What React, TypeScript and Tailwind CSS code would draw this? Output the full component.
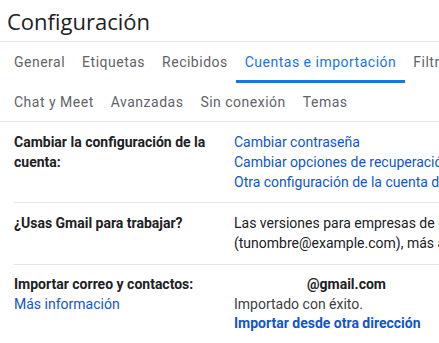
const ROW1_TABS = ["General", "Etiquetas", "Recibidos", "Cuentas e importación", "Filtros y direcciones bloqueadas"];
const ROW2_TABS = ["Chat y Meet", "Avanzadas", "Sin conexión", "Temas"];
const ACTIVE_TAB = "Cuentas e importación";

function Tab({ label }: { label: string }) {
  const active = label === ACTIVE_TAB;
  return (
    <div
      className={
        "relative shrink-0 px-[8.5px] whitespace-nowrap " +
        (active ? "text-[#1a73e8]" : "text-[#5f6368]")
      }
    >
      <span className="leading-[20px]">{label}</span>
      {active && <div className="absolute left-0 right-0 bottom-0 h-[3px] bg-[#1a73e8]" />}
    </div>
  );
}

function SettingRow({
  label,
  children,
  className = "",
}: {
  label: React.ReactNode;
  children: React.ReactNode;
  className?: string;
}) {
  return (
    <div className={"flex border-t border-[#e5e5e5] " + className}>
      <div className="w-[220px] shrink-0 pr-[8px] font-bold text-[#202124]">{label}</div>
      <div className="flex flex-col whitespace-nowrap text-[#202124]">{children}</div>
    </div>
  );
}

export default function App() {
  return (
    <div
      className="w-[439px] h-[343px] overflow-hidden bg-white text-[14px] leading-[20px]"
      style={{ fontFamily: "Roboto, 'Liberation Sans', sans-serif" }}
    >
      {/* Page title */}
      <div
        className="h-[42px] flex items-center px-[7px] text-[22px] text-[#202124] border-b border-[#e5e5e5]"
        style={{ fontFamily: "'Open Sans', Roboto, sans-serif" }}
      >
        Configuración
      </div>

      {/* Tab strip */}
      <div className="border-b border-[#e5e5e5] px-[5.5px] text-[14px] tracking-[0.5px]">
        <div className="flex h-[41px] pt-[10px]">
          {ROW1_TABS.map(t => (
            <Tab key={t} label={t} />
          ))}
        </div>
        <div className="flex h-[38px] pt-[9px]">
          {ROW2_TABS.map(t => (
            <Tab key={t} label={t} />
          ))}
        </div>
      </div>

      {/* Settings table */}
      <div className="pl-[14px]">
        <SettingRow label="Cambiar la configuración de la cuenta:" className="border-t-0 pt-[10px] pb-[10px]">
          <a className="text-[#1155cc]">Cambiar contraseña</a>
          <a className="text-[#1155cc]">Cambiar opciones de recuperación de contraseña</a>
          <a className="text-[#1155cc]">Otra configuración de la cuenta de Google</a>
        </SettingRow>
        <SettingRow label="¿Usas Gmail para trabajar?" className="pt-[10px] pb-[11px]">
          <span>Las versiones para empresas de Google Workspace</span>
          <span>(tunombre@example.com), más almacenamiento</span>
        </SettingRow>
        <SettingRow
          className="pt-[10px] pb-[10px] leading-[19.5px]"
          label={
            <>
              <div>Importar correo y contactos:</div>
              <a className="font-normal text-[#1155cc]">Más información</a>
            </>
          }
        >
          <span className="pl-[73px] font-bold">@gmail.com</span>
          <span className="text-[#3c4043]">Importado con éxito.</span>
          <a className="font-bold text-[#1155cc]">Importar desde otra dirección</a>
        </SettingRow>
      </div>
    </div>
  );
}
